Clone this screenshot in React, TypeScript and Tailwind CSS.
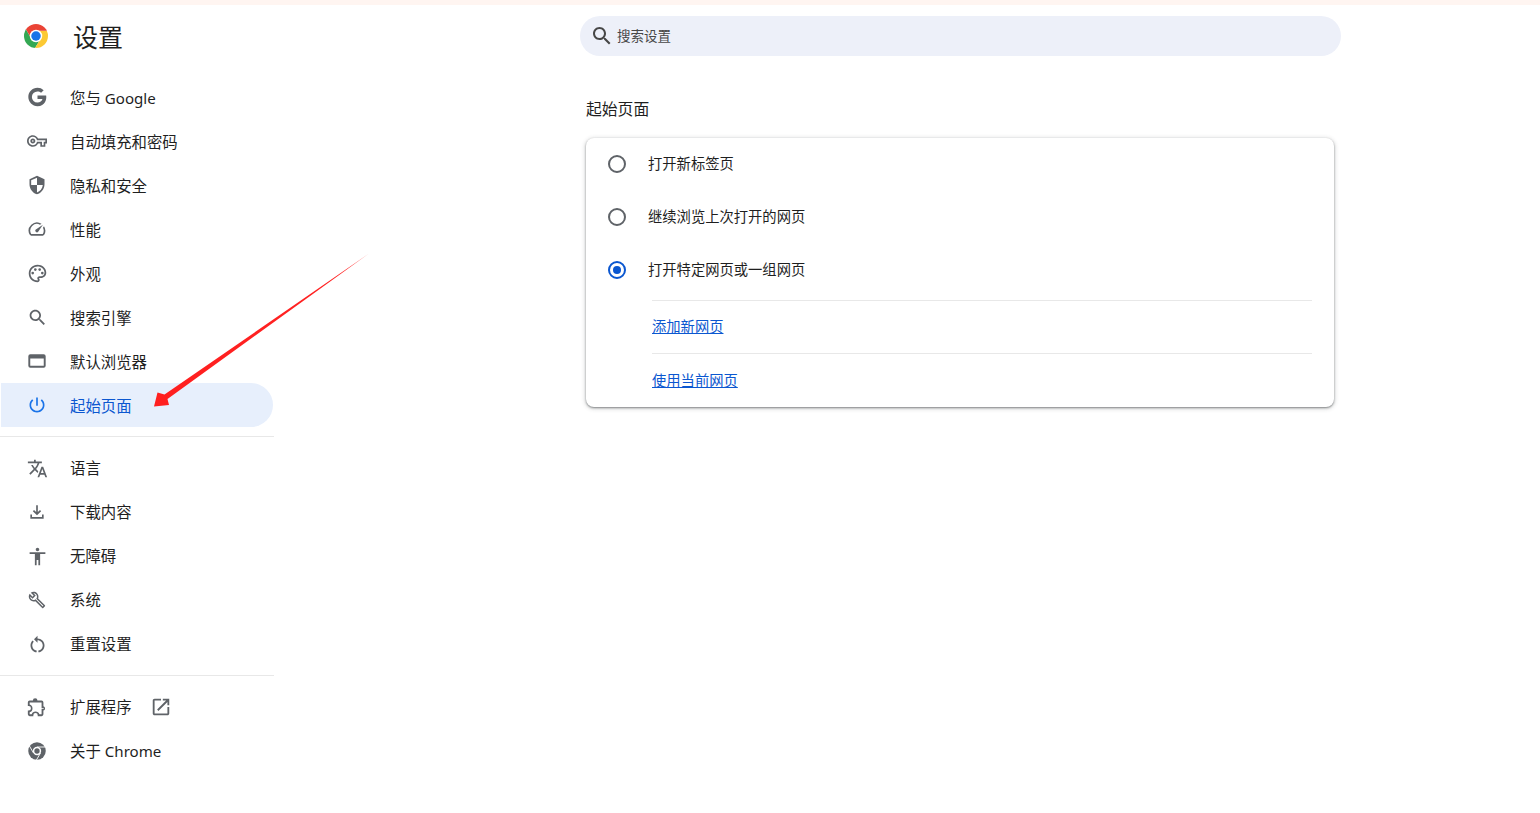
import React from 'react';

const FONT = "font-['Noto_Sans','Noto_Sans_CJK_SC',sans-serif]";

// material icon paths, 24x24
const ICONS: Record<string, React.ReactNode> = {
  google: <path d="M12.545 10.239v3.821h5.445c-.712 2.315-2.647 3.972-5.445 3.972a6.033 6.033 0 110-12.064c1.498 0 2.866.549 3.921 1.453l2.814-2.814A9.969 9.969 0 0012.545 2C7.021 2 2.543 6.477 2.543 12s4.478 10 10.002 10c8.396 0 10.249-7.85 9.426-11.748l-9.426-.013z" />,
  key: <path d="M22 19h-6v-4h-2.68c-1.14 2.42-3.6 4-6.32 4-3.86 0-7-3.14-7-7s3.14-7 7-7c2.72 0 5.17 1.58 6.32 4H24v6h-2v4zm-4-2h2v-4h2v-2H11.94l-.23-.67C11.01 8.34 9.11 7 7 7c-2.76 0-5 2.24-5 5s2.24 5 5 5c2.11 0 4.01-1.34 4.71-3.33l.23-.67H18v4zM7 15c-1.65 0-3-1.35-3-3s1.35-3 3-3 3 1.35 3 3-1.35 3-3 3zm0-4c-.55 0-1 .45-1 1s.45 1 1 1 1-.45 1-1-.45-1-1-1z" />,
  shield: <path d="M12 1L3 5v6c0 5.55 3.84 10.74 9 12 5.16-1.26 9-6.45 9-12V5l-9-4zm0 10.99h7c-.53 4.12-3.28 7.79-7 8.94V12H5V6.3l7-3.11v8.8z" />,
  speed: <path d="M20.38 8.57l-1.23 1.85a8 8 0 0 1-.22 7.58H5.07A8 8 0 0 1 15.58 6.85l1.85-1.23A10 10 0 0 0 3.35 19a2 2 0 0 0 1.72 1h13.85a2 2 0 0 0 1.74-1 10 10 0 0 0-.27-10.44zm-9.79 6.84a2 2 0 0 0 2.83 0l5.66-8.49-8.49 5.66a2 2 0 0 0 0 2.83z" />,
  palette: (
    <>
      <path d="M12 22C6.49 22 2 17.51 2 12S6.49 2 12 2s10 4.04 10 9c0 3.31-2.69 6-6 6h-1.77c-.28 0-.5.22-.5.5 0 .12.05.23.13.33.41.47.64 1.06.64 1.67 0 1.38-1.12 2.5-2.5 2.5zm0-18c-4.41 0-8 3.59-8 8s3.59 8 8 8c.28 0 .5-.22.5-.5 0-.16-.08-.28-.14-.35-.41-.46-.63-1.05-.63-1.65 0-1.38 1.12-2.5 2.5-2.5H16c2.21 0 4-1.79 4-4 0-3.86-3.59-7-8-7z" />
      <circle cx="6.5" cy="11.5" r="1.5" />
      <circle cx="9.5" cy="7.5" r="1.5" />
      <circle cx="14.5" cy="7.5" r="1.5" />
      <circle cx="17.5" cy="11.5" r="1.5" />
    </>
  ),
  search: <path d="M15.5 14h-.79l-.28-.27C15.41 12.59 16 11.11 16 9.5 16 5.91 13.09 3 9.5 3S3 5.91 3 9.5 5.91 16 9.5 16c1.61 0 3.09-.59 4.23-1.57l.27.28v.79l5 4.99L20.49 19l-4.99-5zm-6 0C7.01 14 5 11.99 5 9.5S7.01 5 9.5 5 14 7.01 14 9.5 11.99 14 9.5 14z" />,
  browser: <path d="M4 4h16a2.4 2.4 0 0 1 2.4 2.4v11.2A2.4 2.4 0 0 1 20 20H4a2.4 2.4 0 0 1-2.4-2.4V6.4A2.4 2.4 0 0 1 4 4zM3.9 9v8.7h16.2V9z" fillRule="evenodd" />,
  power: <path d="M13 3h-2v10h2V3zm4.83 2.17l-1.42 1.42C17.99 7.86 19 9.81 19 12c0 3.87-3.13 7-7 7s-7-3.13-7-7c0-2.19 1.01-4.14 2.58-5.42L6.17 5.17C4.23 6.82 3 9.26 3 12c0 4.97 4.03 9 9 9s9-4.03 9-9c0-2.74-1.23-5.18-3.17-6.83z" />,
  translate: <path d="M12.87 15.07l-2.54-2.51.03-.03c1.74-1.94 2.98-4.17 3.71-6.53H17V4h-7V2H8v2H1v1.99h11.17C11.5 7.92 10.44 9.75 9 11.35 8.07 10.32 7.3 9.19 6.69 8h-2c.73 1.63 1.73 3.17 2.98 4.56l-5.09 5.02L4 19l5-5 3.11 3.11.76-2.04zM18.5 10h-2L12 22h2l1.12-3h4.75L21 22h2l-4.5-12zm-2.62 7l1.62-4.33L19.12 17h-3.24z" />,
  download: <path d="M12 16l-5-5 1.4-1.45 2.6 2.6V4h2v8.15l2.6-2.6L17 11zm-8 4v-5h2v3h12v-3h2v5z" />,
  access: <path d="M12 2c1.1 0 2 .9 2 2s-.9 2-2 2-2-.9-2-2 .9-2 2-2zm9 7h-6v13h-2v-6h-2v6H9V9H3V7h18v2z" />,
  wrench: <path d="M22.61 18.99l-9.08-9.08c.93-2.34.45-5.1-1.44-7C9.79.61 6.21.4 3.66 2.26L7.5 6.11 6.08 7.52 2.25 3.69C.39 6.23.6 9.82 2.9 12.11c1.86 1.86 4.57 2.35 6.89 1.48l9.11 9.11c.39.39 1.02.39 1.41 0l2.3-2.3c.4-.38.4-1.01 0-1.41zm-3 1.6l-9.46-9.46c-.61.45-1.29.72-2 .82-1.36.2-2.79-.21-3.83-1.25C3.37 9.76 2.93 8.5 3 7.26l3.09 3.09 4.24-4.24-3.09-3.09c1.24-.07 2.49.37 3.44 1.31 1.08 1.08 1.49 2.57 1.24 3.96-.12.71-.42 1.37-.88 1.96l9.45 9.45-.88.89z" />,
  reset: <path d="M12 5V2L8 6l4 4V7c3.31 0 6 2.69 6 6 0 2.97-2.17 5.43-5 5.91v2.02c3.95-.49 7-3.85 7-7.93 0-4.42-3.58-8-8-8zm-6 8c0-1.65.67-3.15 1.76-4.24L6.34 7.34C4.9 8.79 4 10.79 4 13c0 4.08 3.05 7.44 7 7.93v-2.02c-2.83-.48-5-2.94-5-5.91z" />,
  extension: <path d="M10 2.5A2.5 2.5 0 0 1 12.5 5H17a2 2 0 0 1 2 2v4.1a2.5 2.5 0 0 1 0 4.8V20a2 2 0 0 1-2 2h-4.2v-1a2.4 2.4 0 0 0-4.8 0v1H4a2 2 0 0 1-2-2v-4.2h1a2.4 2.4 0 0 0 0-4.8H2V7a2 2 0 0 1 2-2h3.5A2.5 2.5 0 0 1 10 2.5zM4 7v2.3a4.4 4.4 0 0 1 0 8.4V20h2.2a4.4 4.4 0 0 1 8.4 0H17v-6h2a.5.5 0 0 0 0-1h-2V7z" fillRule="evenodd" />,
  open: <path d="M19 19H5V5h7V3H5c-1.11 0-2 .9-2 2v14c0 1.1.89 2 2 2h14c1.1 0 2-.9 2-2v-7h-2v7zM14 3v2h3.59l-9.83 9.83 1.41 1.41L19 6.41V10h2V3h-7z" />,
};

function Icon({ name, className }: { name: string; className?: string }) {
  return (
    <svg viewBox="0 0 24 24" fill="currentColor" className={className}>
      {ICONS[name]}
    </svg>
  );
}

function ChromeLogo() {
  return (
    <svg viewBox="0 0 48 48" className="w-6 h-6 shrink-0">
      <clipPath id="logo-clip">
        <circle cx="24" cy="24" r="24" />
      </clipPath>
      <g clipPath="url(#logo-clip)">
        <polygon fill="#34a853" points="33.24,29.33 21,50 -10,50 -10,0 -2,0 14.76,29.33" />
        <polygon fill="#fcc934" points="24,13.33 60,13.33 60,50 21,50 33.24,29.33" />
        <polygon fill="#ea4335" points="24,13.33 48,13.33 48,0 -2,0 14.76,29.33" />
      </g>
      <circle cx="24" cy="24" r="12.5" fill="#fff" />
      <circle cx="24" cy="24" r="9.5" fill="#1a73e8" />
    </svg>
  );
}

function ChromeMono() {
  return (
    <svg viewBox="0 0 24 24" className="w-[22px] h-[22px]">
      <circle cx="12" cy="12" r="10.5" fill="currentColor" />
      <path d="M12 7.2h10M16.2 14.4l-5 8.6M7.8 14.4l-5-8.6" stroke="#fff" strokeWidth="1.1" fill="none" />
      <circle cx="12" cy="12" r="5" fill="#fff" />
      <circle cx="12" cy="12" r="3.2" fill="currentColor" />
    </svg>
  );
}

function NavRow({ icon, label, active, lower = true, children }: { icon: React.ReactNode; label: React.ReactNode; active?: boolean; lower?: boolean; children?: React.ReactNode }) {
  return (
    <div
      className={
        active
          ? 'flex items-center h-11 ml-px w-[272px] pl-[26px] gap-[23px] rounded-r-full bg-[#e7effc] text-[#0b57d0]'
          : 'flex items-center h-11 ml-px w-[272px] pl-[26px] gap-[23px] text-[#1f1f1f]'
      }
    >
      <span className={active ? 'w-5 h-5 flex items-center justify-center text-[#1a73e8]' : 'w-5 h-5 flex items-center justify-center text-[#5f6368]'}>
        {icon}
      </span>
      <span className={lower ? 'text-[15.4px] leading-5 pt-[3px]' : 'text-[15.4px] leading-5 pt-px'}>{label}</span>
      {children}
    </div>
  );
}

function Radio({ checked }: { checked?: boolean }) {
  return (
    <span
      className={
        checked
          ? 'w-[18px] h-[18px] shrink-0 rounded-full border-2 border-[#0b57d0] flex items-center justify-center'
          : 'w-[18px] h-[18px] shrink-0 rounded-full border-2 border-[#5f6368]'
      }
    >
      {checked && <span className="w-2 h-2 rounded-full bg-[#0b57d0]" />}
    </span>
  );
}

function RadioRow({ label, checked, first }: { label: string; checked?: boolean; first?: boolean }) {
  return (
    <div className={first ? 'flex items-center h-[52px] pl-[22px] gap-[22px]' : 'flex items-center h-[53px] pl-[22px] gap-[22px]'}>
      <Radio checked={checked} />
      <span className="text-[14.3px] text-[#1f1f1f]">{label}</span>
    </div>
  );
}

export default function App() {
  const i = 'w-5 h-5 shrink-0';
  const i21 = 'w-[21px] h-[21px] shrink-0';
  return (
    <div className={`relative min-h-[813px] bg-white overflow-hidden ${FONT}`}>
      <div className="h-[5px] bg-[#fff5f1]" />

      <div className="flex">
        {/* Sidebar */}
        <aside className="w-[274px] shrink-0">
          <div className="flex items-center h-6 mt-[19px] pl-6 gap-[25px]">
            <ChromeLogo />
            <h1 className="text-[25px] leading-6 text-[#1f1f1f] pt-[2px]">设置</h1>
          </div>
          <nav className="mt-[27px]">
            <NavRow icon={<Icon name="google" className="w-[22px] h-[22px] shrink-0" />} label={<>您与 <span className="text-[15.1px]">Google</span></>} />
            <NavRow icon={<Icon name="key" className={i} />} label="自动填充和密码" />
            <NavRow icon={<Icon name="shield" className={i} />} label="隐私和安全" />
            <NavRow icon={<Icon name="speed" className={i} />} label="性能" />
            <NavRow icon={<Icon name="palette" className={i21} />} label="外观" />
            <NavRow icon={<Icon name="search" className={i21} />} label="搜索引擎" />
            <NavRow icon={<Icon name="browser" className={i} />} label="默认浏览器" />
            <NavRow active icon={<Icon name="power" className={i} />} label="起始页面" />
            <div className="h-px bg-[#e8e8e8] my-[9px]" />
            <NavRow lower={false} icon={<Icon name="translate" className={i21} />} label="语言" />
            <NavRow lower={false} icon={<Icon name="download" className={i} />} label="下载内容" />
            <NavRow lower={false} icon={<Icon name="access" className={i21} />} label="无障碍" />
            <NavRow lower={false} icon={<Icon name="wrench" className="w-[18px] h-[18px] shrink-0" />} label="系统" />
            <NavRow lower={false} icon={<Icon name="reset" className={i21} />} label="重置设置" />
            <div className="h-px bg-[#e8e8e8] my-[9px]" />
            <NavRow lower={false} icon={<Icon name="extension" className="w-[22px] h-[22px] shrink-0" />} label="扩展程序">
              <Icon name="open" className="w-[22px] h-[22px] -ml-[5px] text-[#5f6368]" />
            </NavRow>
            <NavRow lower={false} icon={<ChromeMono />} label={<>关于 <span className="text-[15.1px]">Chrome</span></>} />
          </nav>
        </aside>

        {/* Main */}
        <main className="pl-[306px]">
          <div className="flex items-center w-[761px] h-10 mt-[11px] pl-[10px] gap-[3px] rounded-full bg-[#edf0f9]">
            <Icon name="search" className="w-6 h-6 text-[#474747]" />
            <span className="text-[13.5px] text-[#474747]">搜索设置</span>
          </div>

          <h2 className="ml-[6px] mt-[43px] text-[15.8px] leading-5 font-normal text-[#1f1f1f]">起始页面</h2>

          <section className="ml-[6px] mt-[19px] w-[748px] h-[269px] rounded-lg bg-white shadow-[0_1px_2px_rgba(60,64,67,0.55),0_1px_4px_1px_rgba(60,64,67,0.2)]">
            <RadioRow first label="打开新标签页" />
            <RadioRow label="继续浏览上次打开的网页" />
            <RadioRow checked label="打开特定网页或一组网页" />
            <div className="h-px bg-[#e8e8e8] mt-[4px] ml-[66px] mr-[22px]" />
            <div className="flex items-center h-[52px] pl-[66px]">
              <a className="text-[14.3px] text-[#0b57d0] underline">添加新网页</a>
            </div>
            <div className="h-px bg-[#e8e8e8] ml-[66px] mr-[22px]" />
            <div className="flex items-center h-[53px] pl-[66px] pt-px">
              <a className="text-[14.3px] text-[#0b57d0] underline">使用当前网页</a>
            </div>
          </section>
        </main>
      </div>

      {/* red annotation arrow */}
      <svg className="absolute left-0 top-0 w-[400px] h-[440px] pointer-events-none" viewBox="0 0 400 440">
        <defs>
          <linearGradient id="arrow-fade" gradientUnits="userSpaceOnUse" x1="368" y1="254" x2="155" y2="406">
            <stop offset="0" stopColor="#ff2a2a" stopOpacity="0.7" />
            <stop offset="0.1" stopColor="#ff2222" />
            <stop offset="1" stopColor="#ff1f1f" />
          </linearGradient>
        </defs>
        <polygon fill="url(#arrow-fade)" points="369,253.5 164.5,394.5 157.5,392.5 154,406.5 169,405 167.5,399" />
      </svg>
    </div>
  );
}
